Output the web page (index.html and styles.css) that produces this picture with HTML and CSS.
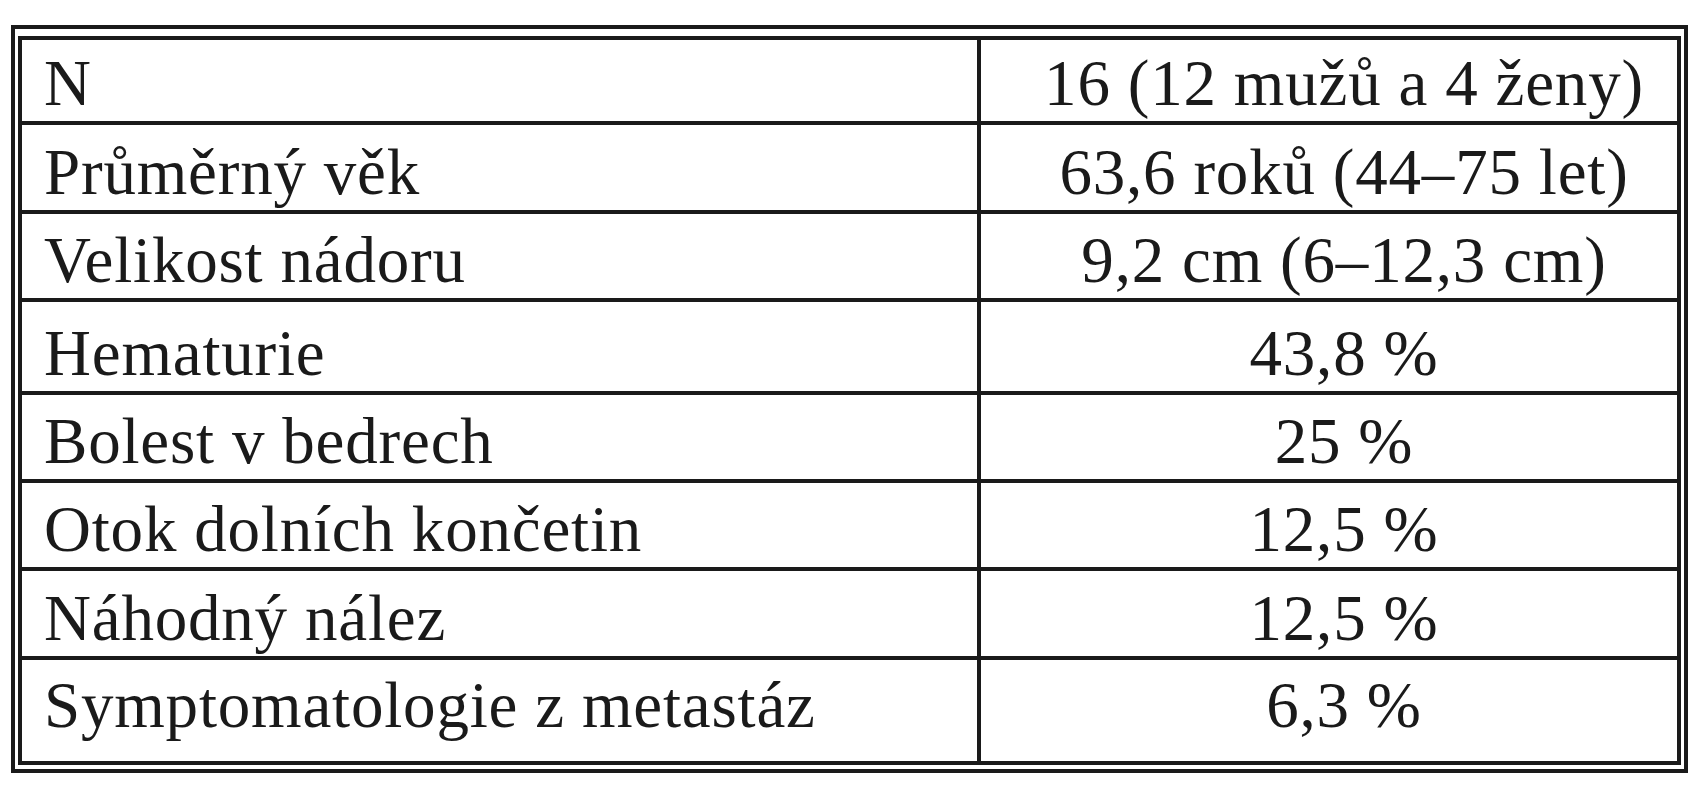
FILE: index.html
```html
<!DOCTYPE html>
<html lang="cs">
<head>
<meta charset="utf-8">
<title>Tabulka</title>
<link rel="stylesheet" href="styles.css">
</head>
<body>
<div class="frame">
  <table class="data">
    <tbody>
      <tr class="r1"><td class="label">N</td><td class="value">16 (12 mužů a 4 ženy)</td></tr>
      <tr class="r2"><td class="label">Průměrný věk</td><td class="value">63,6 roků (44–75 let)</td></tr>
      <tr class="r3"><td class="label">Velikost nádoru</td><td class="value">9,2 cm (6–12,3 cm)</td></tr>
      <tr class="r4"><td class="label">Hematurie</td><td class="value">43,8 %</td></tr>
      <tr class="r5"><td class="label">Bolest v bedrech</td><td class="value">25 %</td></tr>
      <tr class="r6"><td class="label">Otok dolních končetin</td><td class="value">12,5 %</td></tr>
      <tr class="r7"><td class="label">Náhodný nález</td><td class="value">12,5 %</td></tr>
      <tr class="r8 last"><td class="label">Symptomatologie z metastáz</td><td class="value">6,3 %</td></tr>
    </tbody>
  </table>
</div>
</body>
</html>
```
FILE: styles.css
```css
* {
  box-sizing: border-box;
}

html, body {
  margin: 0;
  padding: 0;
  background: #ffffff;
}

.frame {
  margin: 25px 0 0 11px;
  width: 1677px;
  border: 4px solid #1a1a1a;
  padding: 7px 3px 4px 3px;
}

.data {
  width: 1663px;
  border: 4px solid #1a1a1a;
  border-collapse: separate;
  border-spacing: 0;
  table-layout: fixed;
  font-family: "Liberation Serif", "Times New Roman", serif;
  font-size: 65px;
  letter-spacing: 0.8px;
  line-height: 72px;
  color: #1a1a1a;
}

.data td {
  padding: 0 0 2px 0;
  vertical-align: bottom;
  border-bottom: 4px solid #1a1a1a;
  white-space: nowrap;
}

.data tr.last td {
  border-bottom: none;
  padding-bottom: 20px;
}

.data td.label {
  width: 959px;
  padding-left: 22px;
  border-right: 4px solid #1a1a1a;
  text-align: left;
}

.data td.value {
  width: 696px;
  padding-left: 30px;
  text-align: center;
}

.r1 td { height: 85px; }
.r2 td { height: 89px; }
.r3 td { height: 88px; }
.r4 td { height: 93px; }
.r5 td { height: 88px; }
.r6 td { height: 88px; }
.r7 td { height: 89px; }
.r8 td { height: 101px; }
```
